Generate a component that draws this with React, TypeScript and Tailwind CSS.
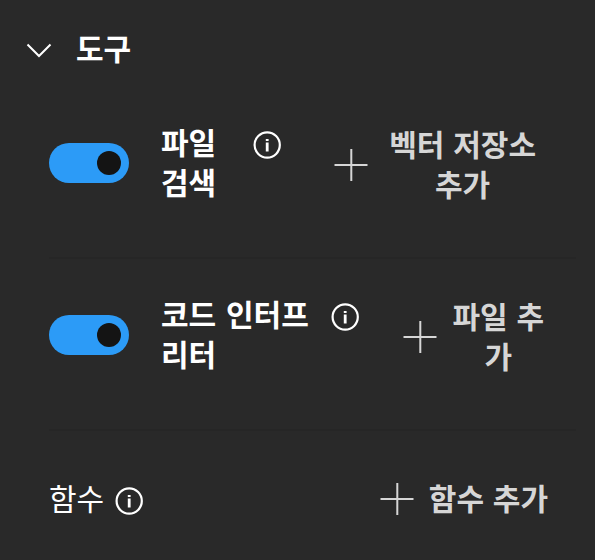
import type { ReactNode } from 'react'

function ChevronIcon() {
  return (
    <svg width="26" height="16" viewBox="0 0 26 16" fill="none" className="shrink-0" aria-hidden="true">
      <path d="M1.5 2.5 13 14 24.5 2.5" stroke="#ffffff" strokeWidth="2" />
    </svg>
  )
}

function InfoIcon() {
  return (
    <svg width="28" height="28" viewBox="0 0 28 28" fill="none" className="shrink-0" aria-hidden="true">
      <circle cx="14.2" cy="14" r="12.6" stroke="#ffffff" strokeWidth="2.2" />
      <path d="M12.8 8h2.8v2h-2.8zM12.8 11.4h2.8v9h-2.8z" fill="#ffffff" />
    </svg>
  )
}

function PlusIcon() {
  return (
    <svg width="34" height="34" viewBox="0 0 34 34" fill="none" className="shrink-0" aria-hidden="true">
      <path d="M.5 17h33M17.3 1v32" stroke="#d6d6d6" strokeWidth="2" />
    </svg>
  )
}

function Toggle({ label }: { label: string }) {
  return (
    <button
      type="button"
      role="switch"
      aria-checked="true"
      aria-label={label}
      className="flex h-10 w-20 shrink-0 items-center justify-end rounded-full bg-[#2c9bf7] pr-2"
    >
      <span className="size-6 rounded-full bg-[#141414]" />
    </button>
  )
}

interface AddButtonProps {
  gap: string
  children: ReactNode
}

function AddButton({ gap, children }: AddButtonProps) {
  return (
    <button type="button" className={`flex items-center font-bold text-[#d6d6d6] [word-spacing:2px] ${gap}`}>
      <span className="pt-1">
        <PlusIcon />
      </span>
      <span className="text-center">{children}</span>
    </button>
  )
}

export default function App() {
  return (
    <div className="h-[560px] w-[595px] overflow-hidden bg-[#292929] font-['Noto_Sans_CJK_KR',sans-serif] text-[30px] leading-10 whitespace-nowrap text-white [word-spacing:3px]">
      <header className="flex h-[85px] items-start gap-6 pt-[27px] pl-[26px]">
        <span className="pt-[15px]">
          <ChevronIcon />
        </span>
        <h2 className="font-bold">도구</h2>
      </header>

      <div className="mr-[19px] ml-[49px]">
        <section className="flex h-[174px] items-start border-b-2 border-[#262626] pt-9">
          <div className="flex pt-[22px]">
            <Toggle label="파일 검색" />
          </div>
          <h3 className="ml-8 font-bold">
            파일
            <br />
            검색
          </h3>
          <div className="ml-[37px] pt-2.5">
            <InfoIcon />
          </div>
          <div className="mt-0.5 mr-10 ml-auto">
            <AddButton gap="gap-[21px]">
              벡터 저장소
              <br />
              추가
            </AddButton>
          </div>
        </section>

        <section className="flex h-[172px] items-start border-b-2 border-[#262626] pt-[34px]">
          <div className="flex pt-[22px]">
            <Toggle label="코드 인터프리터" />
          </div>
          <h3 className="ml-8 font-bold">
            코드 인터프
            <br />
            리터
          </h3>
          <div className="ml-[22px] pt-2.5">
            <InfoIcon />
          </div>
          <div className="mt-0.5 mr-8 ml-auto">
            <AddButton gap="gap-[15px]">
              파일 추
              <br />
              가
            </AddButton>
          </div>
        </section>

        <section className="flex items-start justify-between pt-[46px]">
          <div className="flex gap-[11px]">
            <h3 className="font-normal">함수</h3>
            <div className="pt-2.5">
              <InfoIcon />
            </div>
          </div>
          <div className="mr-7">
            <AddButton gap="gap-[15px]">함수 추가</AddButton>
          </div>
        </section>
      </div>
    </div>
  )
}
